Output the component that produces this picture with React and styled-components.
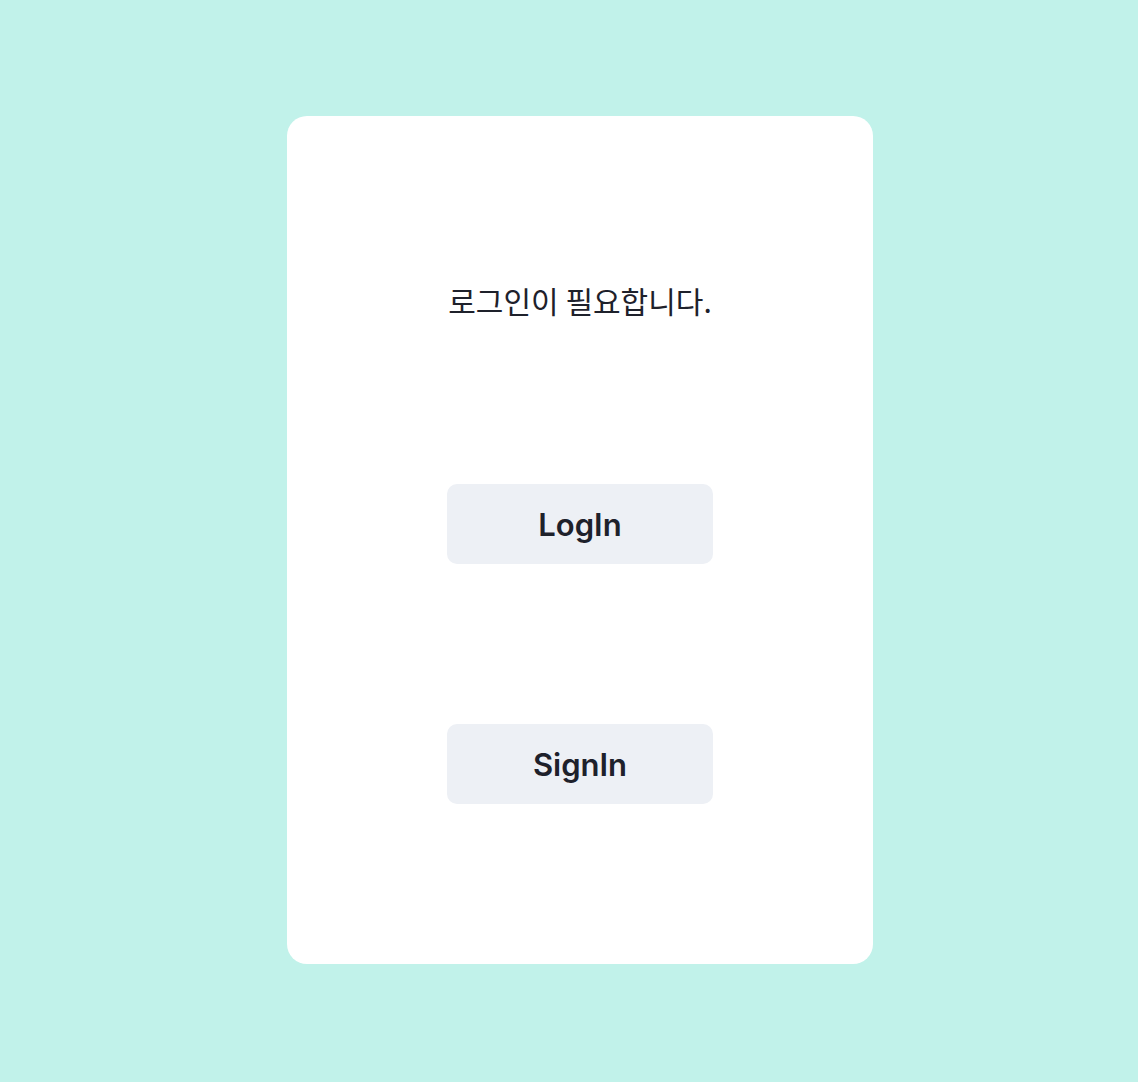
import styled, { createGlobalStyle } from "styled-components";

const GlobalStyle = createGlobalStyle`
  html, body {
    margin: 0;
    padding: 0;
    background: #c1f2ea;
  }
  body {
    font-family: Inter, "Noto Sans CJK KR", sans-serif;
    color: #1e212b;
  }
`;

const Page = styled.div`
  min-height: 1082px;
  display: flex;
  align-items: center;
  justify-content: center;
  padding: 0 0 2px 22px;
  box-sizing: border-box;
`;

const Card = styled.div`
  width: 586px;
  background: #ffffff;
  border-radius: 20px;
  padding: 160px 0;
  display: flex;
  flex-direction: column;
  align-items: center;
  gap: 160px;
`;

const Message = styled.p`
  margin: 0;
  font-family: "Noto Sans CJK KR", Inter, sans-serif;
  font-size: 30px;
  line-height: 48px;
  font-weight: 400;
  color: #1e212b;
`;

const Button = styled.button`
  width: 266px;
  height: 80px;
  border: none;
  border-radius: 10px;
  background: #edf0f5;
  font-family: Inter, sans-serif;
  font-size: 31px;
  font-weight: 600;
  color: #1e212b;
  cursor: pointer;
`;

export default function App() {
  return (
    <>
      <GlobalStyle />
      <Page>
        <Card>
          <Message>로그인이 필요합니다.</Message>
          <Button>LogIn</Button>
          <Button>SignIn</Button>
        </Card>
      </Page>
    </>
  );
}
